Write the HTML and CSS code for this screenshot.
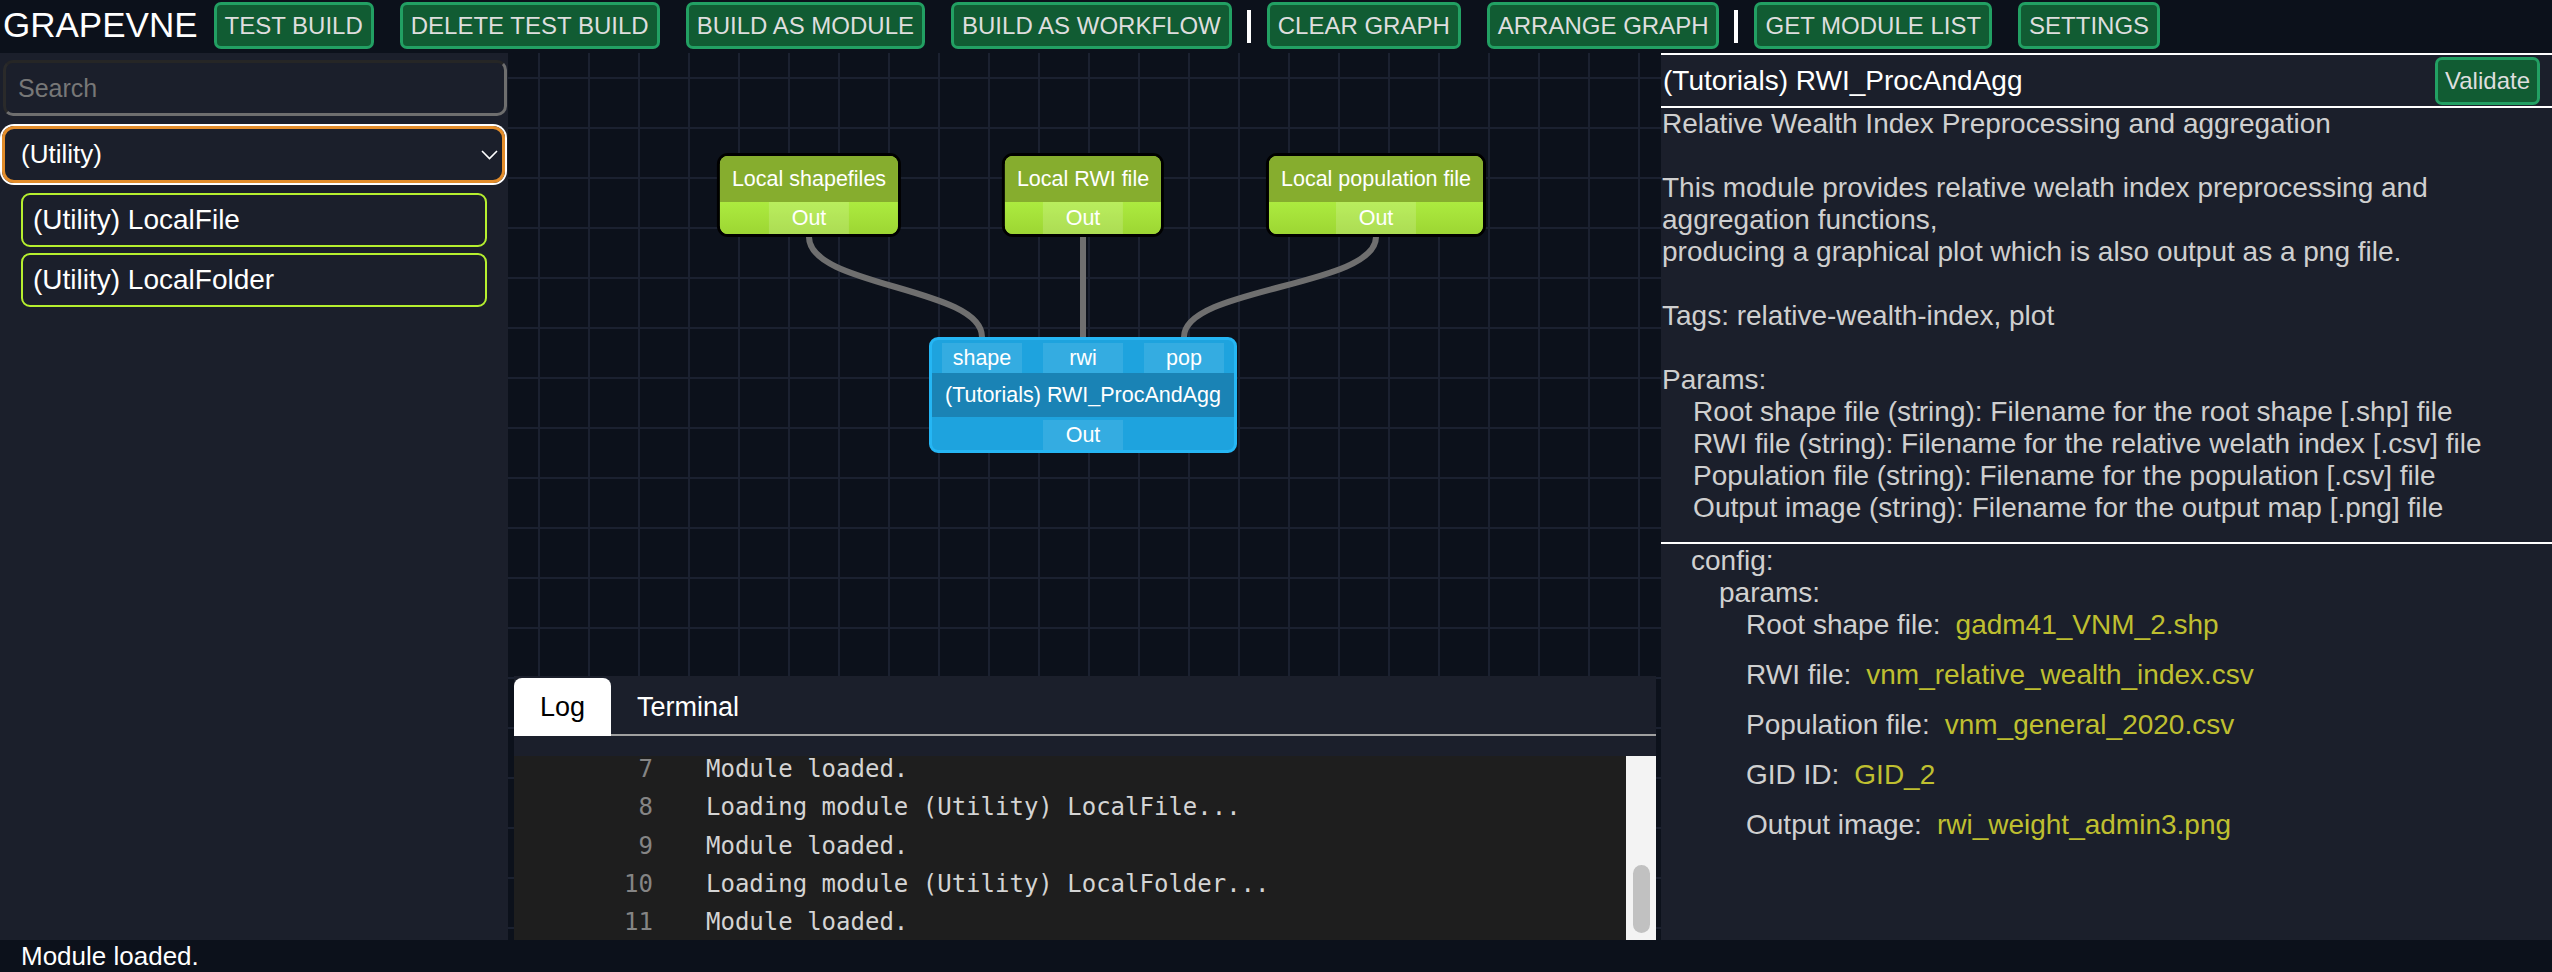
FILE: index.html
```html
<!DOCTYPE html>
<html>
<head>
<meta charset="utf-8">
<title>GRAPEVNE</title>
<link rel="stylesheet" href="styles.css">
</head>
<body>
<div class="app">
  <header class="topbar">
    <span class="brand">GRAPEVNE</span>
    <button class="btn">TEST BUILD</button>
    <button class="btn">DELETE TEST BUILD</button>
    <button class="btn">BUILD AS MODULE</button>
    <button class="btn">BUILD AS WORKFLOW</button>
    <span class="sep"></span>
    <button class="btn">CLEAR GRAPH</button>
    <button class="btn">ARRANGE GRAPH</button>
    <span class="sep"></span>
    <button class="btn">GET MODULE LIST</button>
    <button class="btn">SETTINGS</button>
  </header>

  <div class="main">
    <aside class="sidebar">
      <input class="search" type="text" placeholder="Search">
      <div class="select">
        <span>(Utility)</span>
        <svg class="chev" width="17" height="10" viewBox="0 0 17 10"><polyline points="1,1 8.5,8.5 16,1" fill="none" stroke="#ffffff" stroke-width="1.6"/></svg>
      </div>
      <div class="mod-list">
        <div class="mod-item">(Utility) LocalFile</div>
        <div class="mod-item">(Utility) LocalFolder</div>
      </div>
    </aside>

    <section class="center">
      <div class="canvas">
        <svg class="links" width="1153" height="623" viewBox="0 0 1153 623">
          <path d="M301 184 C301 234 474 234 474 284" />
          <path d="M575 184 L575 284" />
          <path d="M868 184 C868 234 676 234 676 284" />
        </svg>
        <div class="node node-src n-shape">
          <div class="title">Local shapefiles</div>
          <div class="outs"><div class="port">Out</div></div>
        </div>
        <div class="node node-src n-rwi">
          <div class="title">Local RWI file</div>
          <div class="outs"><div class="port">Out</div></div>
        </div>
        <div class="node node-src n-pop">
          <div class="title">Local population file</div>
          <div class="outs"><div class="port">Out</div></div>
        </div>
        <div class="node node-mod n-agg">
          <div class="ins">
            <div class="port">shape</div>
            <div class="port">rwi</div>
            <div class="port">pop</div>
          </div>
          <div class="title">(Tutorials) RWI_ProcAndAgg</div>
          <div class="outs"><div class="port">Out</div></div>
        </div>
      </div>

      <div class="logpanel">
        <div class="tabs">
          <div class="tab active">Log</div>
          <div class="tab">Terminal</div>
        </div>
        <div class="tabgap"></div>
        <div class="logarea">
          <div class="loglines">
            <div class="logline"><span class="ln">7</span><span class="lt">Module loaded.</span></div>
            <div class="logline"><span class="ln">8</span><span class="lt">Loading module (Utility) LocalFile...</span></div>
            <div class="logline"><span class="ln">9</span><span class="lt">Module loaded.</span></div>
            <div class="logline"><span class="ln">10</span><span class="lt">Loading module (Utility) LocalFolder...</span></div>
            <div class="logline"><span class="ln">11</span><span class="lt">Module loaded.</span></div>
          </div>
          <div class="scrollbar"><div class="thumb"></div></div>
        </div>
      </div>
    </section>

    <aside class="info">
      <div class="info-head">
        <span class="info-title">(Tutorials) RWI_ProcAndAgg</span>
        <button class="btn btn-validate">Validate</button>
      </div>
      <div class="desc">Relative Wealth Index Preprocessing and aggregation

This module provides relative welath index preprocessing and
aggregation functions,
producing a graphical plot which is also output as a png file.

Tags: relative-wealth-index, plot

Params:
    Root shape file (string): Filename for the root shape [.shp] file
    RWI file (string): Filename for the relative welath index [.csv] file
    Population file (string): Filename for the population [.csv] file
    Output image (string): Filename for the output map [.png] file</div>
      <div class="config">
        <div class="cfg-line">config:</div>
        <div class="cfg-line cfg-params">params:</div>
        <div class="param-row"><span class="key">Root shape file:</span><span class="val">gadm41_VNM_2.shp</span></div>
        <div class="param-row"><span class="key">RWI file:</span><span class="val">vnm_relative_wealth_index.csv</span></div>
        <div class="param-row"><span class="key">Population file:</span><span class="val">vnm_general_2020.csv</span></div>
        <div class="param-row"><span class="key">GID ID:</span><span class="val">GID_2</span></div>
        <div class="param-row"><span class="key">Output image:</span><span class="val">rwi_weight_admin3.png</span></div>
      </div>
    </aside>
  </div>

  <footer class="status">Module loaded.</footer>
</div>
</body>
</html>
```

FILE: styles.css
```css
* { box-sizing: border-box; }

html, body {
  margin: 0;
  padding: 0;
}

body {
  width: 2552px;
  height: 972px;
  overflow: hidden;
  background: #0c111b;
  color: #ffffff;
  font-family: "Liberation Sans", Arial, sans-serif;
}

.app {
  display: flex;
  flex-direction: column;
  height: 972px;
}

/* ---------- top bar ---------- */
.topbar {
  height: 53px;
  display: flex;
  align-items: flex-start;
  padding: 2px 0 0 3px;
  background: #0c111b;
}

.brand {
  font-size: 35px;
  line-height: 46px;
  color: #ffffff;
  margin-right: 3px;
}

.btn {
  height: 47px;
  margin: 0 13px;
  padding: 0 8px;
  border: 3px solid #22a063;
  background: #115c33;
  border-radius: 7px;
  color: #dedede;
  font-family: "Liberation Sans", Arial, sans-serif;
  font-size: 24px;
  line-height: 41px;
  white-space: nowrap;
  cursor: pointer;
}

.sep {
  width: 4px;
  height: 33px;
  background: #ffffff;
  margin: 8px 3px 0 2px;
}

/* ---------- main ---------- */
.main {
  display: flex;
  height: 887px;
}

/* ---------- sidebar ---------- */
.sidebar {
  width: 508px;
  flex: none;
  background: #1b1f2b;
  padding: 7px 1px 0 0;
  display: flex;
  flex-direction: column;
}

.search {
  height: 56px;
  margin-left: 3px;
  width: 504px;
  border-style: solid;
  border-width: 3px;
  border-color: #262626 #6e6e6e #6e6e6e #2a2a2a;
  border-radius: 10px;
  background: #1b1f2b;
  color: #ffffff;
  font-family: "Liberation Sans", Arial, sans-serif;
  font-size: 25px;
  padding: 0 0 0 12px;
  outline: none;
}

.search::placeholder {
  color: #777777;
}

.select {
  margin: 10px 0 0 2px;
  width: 503px;
  height: 57px;
  border: 3px solid #e38d2b;
  border-radius: 12px;
  box-shadow: 0 0 0 2px #ffffff;
  display: flex;
  align-items: center;
  justify-content: space-between;
  padding: 0 4px 0 16px;
  font-size: 26px;
  color: #ffffff;
}

.chev {
  display: block;
}

.mod-list {
  padding: 10px 20px 0 21px;
  display: flex;
  flex-direction: column;
  gap: 6px;
}

.mod-item {
  height: 54px;
  border: 2px solid #b6ef2f;
  border-radius: 9px;
  padding-left: 10px;
  font-size: 28px;
  display: flex;
  align-items: center;
  color: #ffffff;
}

/* ---------- center ---------- */
.center {
  width: 1153px;
  flex: none;
  display: flex;
  flex-direction: column;
  background-color: #0c111b;
  background-image:
    linear-gradient(to right, #1b2130 2px, transparent 2px),
    linear-gradient(to bottom, #1b2130 2px, transparent 2px);
  background-size: 50px 50px;
  background-position: 30px 24px;
}

.canvas {
  flex: 1;
  position: relative;
  overflow: hidden;
}

.links {
  position: absolute;
  left: 0;
  top: 0;
}

.links path {
  fill: none;
  stroke: #6f6f6f;
  stroke-width: 6;
}

.node {
  position: absolute;
  transform: translateX(-50%);
  font-size: 21.5px;
  color: #ffffff;
  white-space: nowrap;
  overflow: hidden;
}

.n-shape { left: 301px; top: 100px; }
.n-rwi   { left: 575px; top: 100px; }
.n-pop   { left: 868px; top: 100px; }
.n-agg   { left: 575px; top: 284px; }

.node-src {
  border: 3px solid #000000;
  border-radius: 11px;
  background: #a5df3a;
}

.node-src .title {
  height: 46px;
  line-height: 46px;
  padding: 0 12px;
  text-align: center;
  background: #86ad2e;
}

.node-src .outs {
  height: 32px;
  display: flex;
  justify-content: center;
  background: linear-gradient(#aceb3f, #9dd633);
}

.port {
  width: 80px;
  text-align: center;
  background: rgba(255, 255, 255, 0.16);
  line-height: 32px;
}

.node-mod {
  border: 3px solid #25b6f4;
  border-radius: 9px;
  background: #1ea3de;
}

.node-mod .ins {
  height: 33px;
  padding: 3px 10px 0;
  display: flex;
  justify-content: center;
  gap: 21px;
}

.node-mod .port {
  height: 30px;
  line-height: 30px;
  background: rgba(255, 255, 255, 0.1);
}

.node-mod .title {
  height: 44px;
  line-height: 44px;
  padding: 0 10px;
  text-align: center;
  background: #1a83b5;
}

.node-mod .outs {
  height: 33px;
  padding-top: 3px;
  display: flex;
  justify-content: center;
}

/* ---------- log panel ---------- */
.logpanel {
  height: 264px;
  margin: 0 5px 0 6px;
  background: #1b1f2b;
  display: flex;
  flex-direction: column;
}

.tabs {
  height: 60px;
  display: flex;
  align-items: flex-end;
  border-bottom: 2px solid #a0a0a0;
}

.tab {
  height: 58px;
  margin-bottom: -2px;
  padding: 0 26px;
  font-size: 27px;
  line-height: 58px;
  color: #ffffff;
}

.tab.active {
  background: #ffffff;
  color: #000000;
  border-radius: 8px 8px 0 0;
}

.tabgap {
  height: 20px;
}

.logarea {
  flex: 1;
  background: #1e1e1e;
  display: flex;
  overflow: hidden;
}

.loglines {
  flex: 1;
  font-family: "DejaVu Sans Mono", "Liberation Mono", monospace;
  font-size: 24px;
  line-height: 26px;
}

.logline {
  display: flex;
  margin-bottom: 12.25px;
}

.ln {
  width: 139px;
  text-align: right;
  color: #858585;
}

.lt {
  margin-left: 53px;
  color: #d4d4d4;
  white-space: pre;
}

.scrollbar {
  width: 30px;
  flex: none;
  background: #f3f3f3;
  padding: 109px 6px 0 7px;
}

.thumb {
  height: 68px;
  border-radius: 9px;
  background: #c1c1c1;
}

/* ---------- info panel ---------- */
.info {
  width: 891px;
  flex: none;
  background: #1b1f2b;
  border-top: 2px solid #ffffff;
  display: flex;
  flex-direction: column;
}

.info-head {
  height: 53px;
  display: flex;
  align-items: center;
  justify-content: space-between;
  padding: 0 12px 0 2px;
  border-bottom: 2px solid #ffffff;
}

.info-title {
  font-size: 28px;
  color: #ffffff;
}

.btn-validate {
  margin: 0;
  height: 48px;
  padding: 0 7px;
  font-size: 24px;
  line-height: 42px;
}

.desc {
  padding: 0 0 18px 1px;
  font-size: 28px;
  line-height: 32px;
  color: #cfcfcf;
  white-space: pre;
}

.config {
  border-top: 2px solid #ffffff;
  padding: 1px 0 0 30px;
  font-size: 28px;
  line-height: 32px;
  color: #d0d0d0;
}

.cfg-params {
  padding-left: 28px;
}

.param-row {
  padding-left: 55px;
  margin-bottom: 18px;
  display: flex;
  white-space: nowrap;
}

.val {
  color: #bfbf30;
  margin-left: 15px;
}

/* ---------- status ---------- */
.status {
  height: 32px;
  padding-left: 21px;
  font-size: 26px;
  line-height: 32px;
  color: #ffffff;
  background: #0c111b;
}
```
